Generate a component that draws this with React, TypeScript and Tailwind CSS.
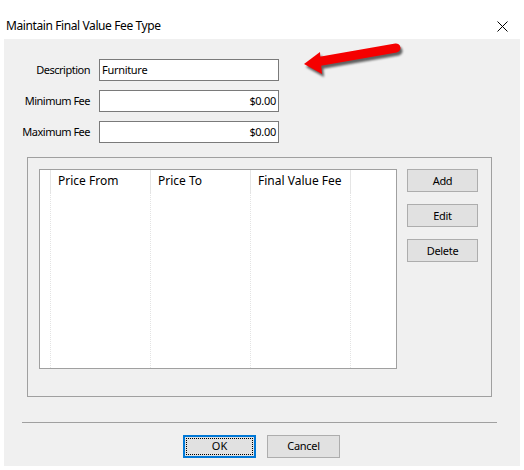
import React from "react";

const labelRows = [
  { label: "Description", value: "Furniture", align: "text-left" },
  { label: "Minimum Fee", value: "$0.00", align: "text-right" },
  { label: "Maximum Fee", value: "$0.00", align: "text-right" },
];

const columns = ["Price From", "Price To", "Final Value Fee"];

export default function App() {
  return (
    <div className="relative w-[524px] h-[470px] bg-white text-black font-['Noto_Sans',sans-serif]">
      {/* Window title bar */}
      <div className="flex items-center justify-between h-[39px] pl-[6px] pr-[16px] pt-[13px]">
        <span className="text-[12px] tracking-[-0.4px]">Maintain Final Value Fee Type</span>
        <svg width="11" height="11" viewBox="0 0 11 11">
          <path d="M0.5 0.5 L10.5 10.5 M10.5 0.5 L0.5 10.5" stroke="#000" strokeWidth="1" />
        </svg>
      </div>

      {/* Dialog body */}
      <div className="mx-[4px] h-[427px] bg-[#f0f0f0] pt-[20px] text-[11px]">
        <div className="flex flex-col gap-[9px]">
          {labelRows.map((row) => (
            <div key={row.label} className="flex items-center">
              <span className="w-[86px] text-right tracking-[-0.5px]">{row.label}</span>
              <div
                className={`ml-[9px] w-[180px] h-[22px] bg-white border border-[#7a7a7a] px-[2px] leading-[20px] tracking-[-0.3px] ${row.align}`}
              >
                {row.value}
              </div>
            </div>
          ))}
        </div>

        {/* Fee bands group */}
        <div className="ml-[23px] mt-[14px] w-[465px] h-[240px] border border-[#a0a0a0] flex pt-[11px] pl-[11px]">
          <div className="w-[358px] h-[200px] bg-white border border-[#a0a0a0] flex text-[12px]">
            <div className="w-[10px] h-full" />
            {columns.map((col) => (
              <div key={col} className="w-[100px] h-full flex flex-col">
                <div className="h-[22px] border-l border-[#e5e5e5] pl-[7px] leading-[22px]">{col}</div>
                <div className="flex-1 border-l border-dotted border-[#e3e3e3]" />
              </div>
            ))}
            <div className="flex-1 h-full flex flex-col">
              <div className="h-[22px] border-l border-[#e5e5e5]" />
              <div className="flex-1 border-l border-dotted border-[#e3e3e3]" />
            </div>
          </div>
          <div className="ml-[10px] flex flex-col gap-[12px]">
            {["Add", "Edit", "Delete"].map((b) => (
              <button
                key={b}
                className="w-[71px] h-[23px] bg-[#e1e1e1] border border-[#adadad] text-[11px] leading-none tracking-[-0.3px]"
              >
                {b}
              </button>
            ))}
          </div>
        </div>

        <div className="ml-[18px] mt-[25px] w-[475px] h-px bg-[#a0a0a0]" />

        <div className="flex mt-[12px] ml-[179px] gap-[11px]">
          <button className="w-[73px] h-[23px] bg-[#e1e1e1] border-2 border-[#0078d7] p-px text-[11px]">
            <div className="w-full h-full border border-dotted border-black flex items-center justify-center">OK</div>
          </button>
          <button className="w-[73px] h-[23px] bg-[#e1e1e1] border border-[#adadad] text-[11px] tracking-[-0.3px]">
            Cancel
          </button>
        </div>
      </div>

      {/* Red callout arrow */}
      <svg
        width="110"
        height="46"
        viewBox="0 0 110 46"
        className="absolute left-[296px] top-[36px] drop-shadow-[2px_3px_1px_rgba(0,0,0,0.6)]"
      >
        <line x1="100" y1="12" x2="20" y2="26" stroke="#f50000" strokeWidth="9" strokeLinecap="round" />
        <polygon points="8,28 24,16 26,38" fill="#f50000" />
      </svg>
    </div>
  );
}
